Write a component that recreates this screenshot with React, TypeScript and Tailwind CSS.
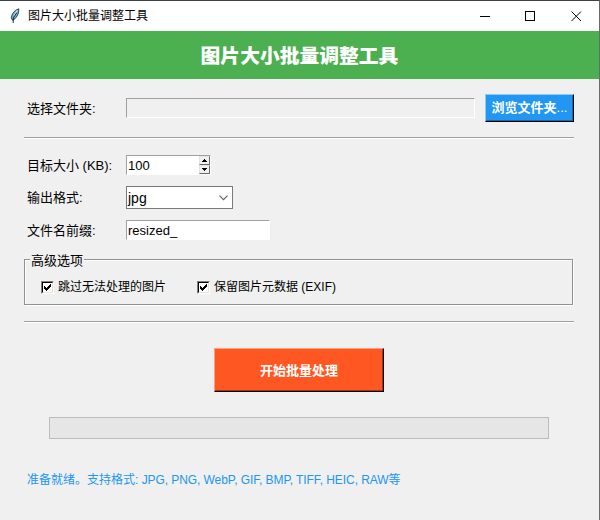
import type { ReactNode } from 'react';

function Separator({ className = '' }: { className?: string }) {
  return <div className={`mx-6 h-[2px] w-[550px] border-t border-b border-t-[#a0a0a0] border-b-white ${className}`} />;
}

function Label({ children }: { children: ReactNode }) {
  return <span className="w-[99px] shrink-0 whitespace-nowrap pt-px text-[13px] leading-[20px]">{children}</span>;
}

function TitleBar() {
  return (
    <div className="flex h-[30px] items-center bg-white">
      <svg className="ml-[9px] h-4 w-[14px]" viewBox="0 0 14 16">
        <path d="M9.8.8 6.3 2.5 3.5 5.8 2.2 9.6 3.5 12.2 6.2 10.6 8.6 7.2 9.6 3.8Z" fill="#6cb2de" stroke="#24323f" strokeWidth=".9" />
        <path d="M8.4 2.4 5 8" stroke="#c4e5f5" strokeWidth="1.2" />
        <path d="M7.8 4.6 4.3 10 4.2 15" fill="none" stroke="#111820" strokeWidth=".9" />
      </svg>
      <span className="ml-[5px] text-[12px] leading-4">图片大小批量调整工具</span>
      <div className="ml-auto mr-[17px] flex gap-[35px]">
        <svg className="h-[11px] w-[10px]" viewBox="0 0 10 11" fill="none" stroke="#000">
          <path d="M0 5.5h10" />
        </svg>
        <svg className="h-[11px] w-[11px]" viewBox="0 0 11 11" fill="none" stroke="#000">
          <path d="M.5.5h9v9h-9z" shapeRendering="crispEdges" />
        </svg>
        <svg className="h-[11px] w-[11px]" viewBox="0 0 11 11" fill="none" stroke="#000">
          <path d="m.5.5 9.5 9.5m0-9.5-9.5 9.5" />
        </svg>
      </div>
    </div>
  );
}

function SpinButton({ up = false }: { up?: boolean }) {
  return (
    <div className="flex h-[9px] w-[11px] items-center justify-center border border-t-[#e3e3e3] border-r-[#696969] border-b-[#696969] border-l-[#e3e3e3] bg-[#f0f0f0]">
      <svg className="h-[3px] w-[5px]" viewBox="0 0 5 3" shapeRendering="crispEdges">
        <path d={up ? 'M2 0h1v1h1v1h1v1H0V2h1V1h1z' : 'M0 0h5v1H4v1H3v1H2V2H1V1H0z'} fill="#000" />
      </svg>
    </div>
  );
}

function Check({ children }: { children: ReactNode }) {
  return (
    <div className="flex items-center">
      <div className="h-[13px] w-[13px] border border-t-[#808080] border-r-white border-b-white border-l-[#808080]">
        <div className="h-[11px] w-[11px] border border-t-black border-r-[#e3e3e3] border-b-[#e3e3e3] border-l-black bg-white">
          <svg className="h-[9px] w-[9px]" viewBox="0 0 9 9" shapeRendering="crispEdges">
            <path d="M1 3h1v1h1v1h1V4h1V3h1V2h1V1h1v3H7v1H6v1H5v1H4v1H3V7H2V6H1z" fill="#000" />
          </svg>
        </div>
      </div>
      <span className="ml-1 whitespace-nowrap text-[12px] leading-4">{children}</span>
    </div>
  );
}

export default function App() {
  return (
    <div className="h-[520px] w-[600px] overflow-hidden border-t border-r border-t-[#3c4248] border-r-[#6a6a6a] bg-[#f0f0f0] font-['Liberation_Sans','Noto_Sans_CJK_SC',sans-serif] text-black">
      <TitleBar />
      <div className="flex h-12 items-center justify-center bg-[#4caf50] pt-px text-[19.8px] font-black leading-6 text-white">
        图片大小批量调整工具
      </div>

      <div className="mt-[15px] flex h-7 items-center pl-[27px]">
        <Label>选择文件夹:</Label>
        <div className="h-5 w-[349px] border border-t-[#a0a0a0] border-r-white border-b-white border-l-[#a0a0a0]" />
        <button className="ml-[10px] h-7 w-[89px] border border-t-[#90caf9] border-r-black border-b-black border-l-[#90caf9] bg-[#2196f3] text-[13px] font-bold leading-5 text-white shadow-[inset_-1px_-1px_#1769aa]">
          浏览文件夹<span className="font-normal">...</span>
        </button>
      </div>

      <Separator className="mt-[15px]" />

      <div className="mt-4 flex h-5 items-center pl-[27px]">
        <Label>目标大小 (KB):</Label>
        <div className="flex h-5 w-[85px] justify-between border border-t-[#a0a0a0] border-r-white border-b-white border-l-[#a0a0a0] bg-white pl-px">
          <span className="text-[13px] leading-[19px]">100</span>
          <div className="flex flex-col">
            <SpinButton up />
            <SpinButton />
          </div>
        </div>
      </div>

      <div className="mt-[11px] flex h-[23px] items-center pl-[27px]">
        <Label>输出格式:</Label>
        <div className="flex h-[23px] w-[107px] items-center justify-between border border-[#7a7a7a] bg-white pl-px pr-[4px]">
          <span className="text-[14px] leading-5">jpg</span>
          <svg className="h-[6px] w-[9px]" viewBox="0 0 9 6" fill="none" stroke="#606060" strokeWidth="1.1">
            <path d="m.5.7 4 4 4-4" />
          </svg>
        </div>
      </div>

      <div className="mt-[11px] flex h-5 items-center pl-[27px]">
        <Label>文件名前缀:</Label>
        <div className="h-5 w-[144px] border border-t-[#a0a0a0] border-r-white border-b-white border-l-[#a0a0a0] bg-white pl-px text-[13px] leading-[19px]">
          resized_
        </div>
      </div>

      <fieldset className="ml-6 mt-[10px] h-[55px] w-[549px] border border-[#919191] px-[5px] shadow-[inset_1px_1px_#fff,1px_1px_#fff]">
        <legend className="h-[19px] w-[54px] whitespace-nowrap bg-[#f0f0f0] pl-px pt-px text-[13px] leading-[19px]">高级选项</legend>
        <div className="mt-[10px] flex pl-[11px]">
          <div className="w-[156px]">
            <Check>跳过无法处理的图片</Check>
          </div>
          <Check>保留图片元数据 (EXIF)</Check>
        </div>
      </fieldset>

      <Separator className="mt-4" />

      <button className="ml-[214px] mt-[25px] block h-11 w-[170px] border border-t-[#ffa07a] border-r-black border-b-black border-l-[#ffa07a] bg-[#ff5722] pt-px text-[13px] font-bold leading-5 text-white shadow-[inset_-1px_-1px_#a63410]">
        开始批量处理
      </button>

      <div className="ml-[49px] mt-[25px] h-[22px] w-[500px] border border-[#bcbcbc] bg-[#e6e6e6]" />

      <div className="ml-[27px] mt-[31px] whitespace-nowrap text-[12px] leading-5 text-[#2196f3]">
        准备就绪。支持格式: <span className="tracking-[-0.08px]">JPG, PNG, WebP, GIF, BMP, TIFF, HEIC, RAW</span>等
      </div>
    </div>
  );
}
